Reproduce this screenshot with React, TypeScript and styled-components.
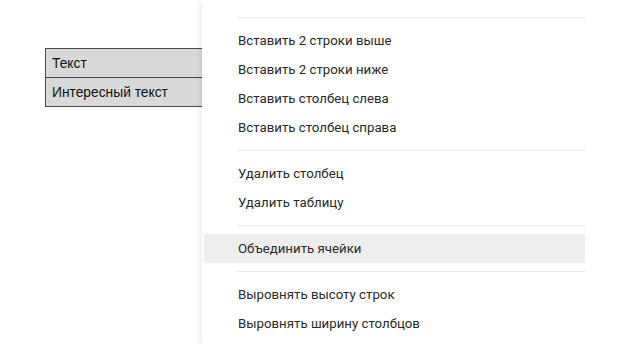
import styled, { createGlobalStyle } from "styled-components";

type Entry = { label: string; active?: boolean } | "sep";

const entries: Entry[] = [
  "sep",
  { label: "Вставить 2 строки выше" },
  { label: "Вставить 2 строки ниже" },
  { label: "Вставить столбец слева" },
  { label: "Вставить столбец справа" },
  "sep",
  { label: "Удалить столбец" },
  { label: "Удалить таблицу" },
  "sep",
  { label: "Объединить ячейки", active: true },
  "sep",
  { label: "Выровнять высоту строк" },
  { label: "Выровнять ширину столбцов" },
];

const Global = createGlobalStyle`
  html, body {
    margin: 0;
    padding: 0;
    background: #fff;
    overflow: hidden;
  }
`;

const Page = styled.div`
  display: flex;
  width: 633px;
  height: 345px;
  overflow: hidden;
`;

const DocArea = styled.div`
  width: 202px;
  flex-shrink: 0;
  padding: 48px 0 0 45px;
  box-sizing: border-box;
  overflow: hidden;
`;

const Table = styled.table`
  border-collapse: collapse;
  width: 220px;
  font-family: "Liberation Sans", Arial, sans-serif;
  font-size: 13.8px;
  color: #111;
`;

const Cell = styled.td`
  background: #d9d9d9;
  border: 1px solid #4a4a4a;
  height: 29px;
  padding: 0 6px;
  box-sizing: border-box;
`;

const Menu = styled.div`
  flex: 1;
  background: #fff;
  padding: 9px 0 0 2px;
  box-shadow: -2px 0 6px rgba(0, 0, 0, 0.08);
`;

const List = styled.div`
  width: 381px;
  display: flex;
  flex-direction: column;
`;

const Item = styled.div<{ $active?: boolean }>`
  height: 29px;
  line-height: 29px;
  padding-left: 34px;
  font-family: Roboto, "Noto Sans", sans-serif;
  font-size: 13.25px;
  color: #2a2a2a;
  background: ${({ $active }) => ($active ? "#eeeeee" : "transparent")};
`;

const Separator = styled.div`
  height: 1px;
  margin: 8px 0 8px 33px;
  background: #e6e6e6;
`;

export default function App() {
  return (
    <>
      <Global />
      <Page>
        <DocArea>
          <Table>
            <tbody>
              <tr>
                <Cell>Текст</Cell>
              </tr>
              <tr>
                <Cell>Интересный текст</Cell>
              </tr>
            </tbody>
          </Table>
        </DocArea>
        <Menu>
          <List>
            {entries.map((e, i) =>
              e === "sep" ? (
                <Separator key={i} />
              ) : (
                <Item key={i} $active={e.active}>
                  {e.label}
                </Item>
              )
            )}
          </List>
        </Menu>
      </Page>
    </>
  );
}
